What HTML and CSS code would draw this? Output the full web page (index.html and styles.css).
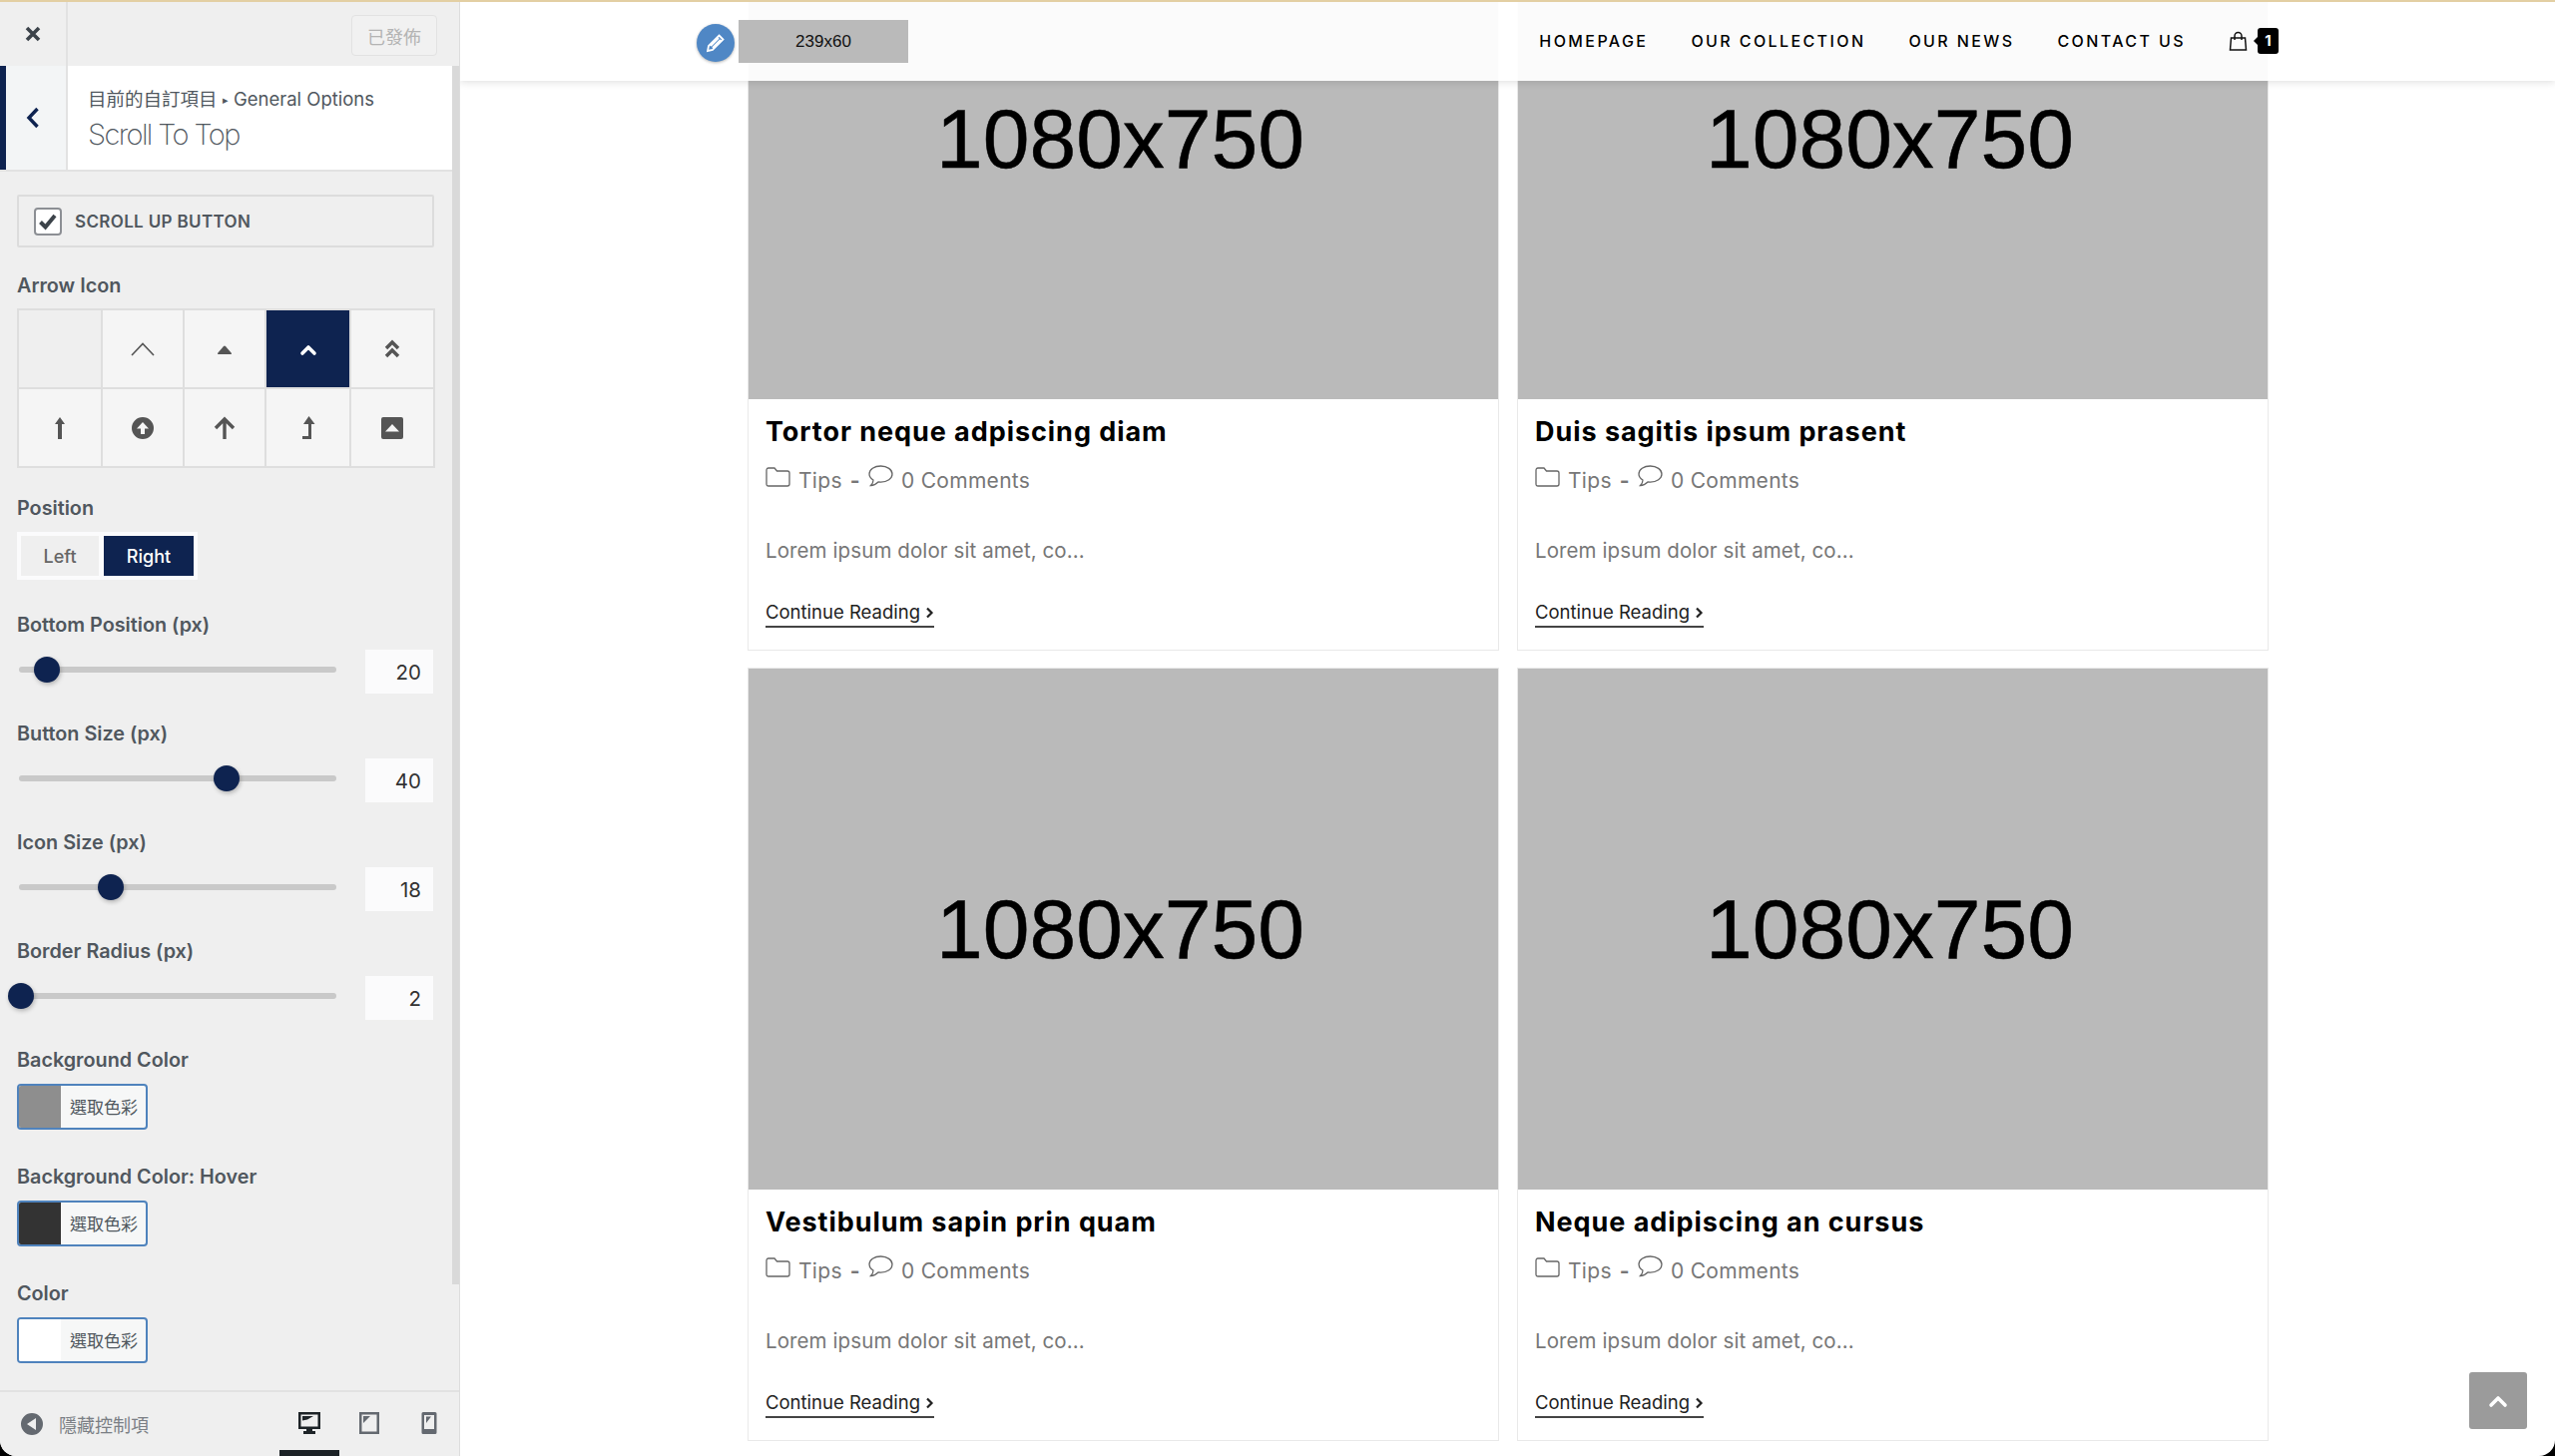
FILE: index.html
```html
<!DOCTYPE html>
<html lang="zh-Hant">
<head>
<meta charset="utf-8">
<title>Scroll To Top</title>
<link rel="stylesheet" href="styles.css">
</head>
<body>
<div class="window">
  <aside class="panel">
    <div class="panel-top">
      <button class="close-btn" aria-label="close"><svg width="16" height="16" viewBox="0 0 16 16"><path d="M2 2l12 12M14 2L2 14" class="close-path"/></svg></button>
      <button class="publish">已發佈</button>
    </div>
    <div class="section-head">
      <div class="back"><svg width="14" height="22" viewBox="0 0 14 22"><path d="M11.500 2L3 11l8.500 9" class="back-path"/></svg></div>
      <div class="section-title">
        <div class="crumb">目前的自訂項目 <span class="crumb-sep">▸</span> General Options</div>
        <div class="heading">Scroll To Top</div>
      </div>
    </div>
    <div class="panel-body">
      <label class="check-row">
        <span class="checkbox"><svg width="20" height="18" viewBox="0 0 20 18"><path d="M2.500 9.500l5 5L17 3" class="check-path"/></svg></span>
        <span class="check-label">SCROLL UP BUTTON</span>
      </label>

      <div class="label label-arrow">Arrow Icon</div>
      <div class="icon-grid">
        <div class="cell cell-empty"></div>
        <div class="cell"><svg width="24" height="24" viewBox="0 0 24 24"><path d="M1 18L12 6.500 23 18" class="line-thin"/></svg></div>
        <div class="cell"><svg width="24" height="24" viewBox="0 0 24 24"><path d="M5 16l6-7q1-1 2 0l6 7q.5 1-1 1H6q-1.500 0-1-1z" class="fill-icon"/></svg></div>
        <div class="cell cell-on"><svg width="24" height="24" viewBox="0 0 24 24"><path d="M6 16l6-6 6 6" class="line-white"/></svg></div>
        <div class="cell"><svg width="24" height="24" viewBox="0 0 24 24"><path d="M6 11l6-6 6 6M6 19l6-6 6 6" class="line-bold"/></svg></div>
        <div class="cell"><svg width="24" height="24" viewBox="0 0 24 24"><path d="M12 1l5 7h-3v15h-4V8H7z" class="fill-icon"/></svg></div>
        <div class="cell"><svg width="24" height="24" viewBox="0 0 24 24"><path d="M12 1a11 11 0 1 0 0 22 11 11 0 0 0 0-22zm0 5l6 6.500h-4V18h-4v-5.500H6z" class="fill-icon" fill-rule="evenodd"/></svg></div>
        <div class="cell"><svg width="24" height="24" viewBox="0 0 24 24"><path d="M12 23V4M3 12l9-9 9 9" class="line-arrow"/></svg></div>
        <div class="cell"><svg width="24" height="24" viewBox="0 0 24 24"><path d="M12.500 0l6 8H15v15H6v-3h6V8H7z" class="fill-icon"/></svg></div>
        <div class="cell"><svg width="24" height="24" viewBox="0 0 24 24"><path d="M3 1h18q2 0 2 2v18q0 2-2 2H3q-2 0-2-2V3q0-2 2-2zm9 7l-7 7.500h14z" class="fill-icon" fill-rule="evenodd"/></svg></div>
      </div>

      <div class="label label-position">Position</div>
      <div class="segmented">
        <span class="seg seg-left">Left</span>
        <span class="seg seg-right">Right</span>
      </div>

      <div class="range-group range-first">
        <div class="label">Bottom Position (px)</div>
        <div class="range-row">
          <div class="slider"><span class="knob" style="left:15px"></span></div>
          <div class="number">20</div>
        </div>
      </div>
      <div class="range-group">
        <div class="label">Button Size (px)</div>
        <div class="range-row">
          <div class="slider"><span class="knob" style="left:195px"></span></div>
          <div class="number">40</div>
        </div>
      </div>
      <div class="range-group">
        <div class="label">Icon Size (px)</div>
        <div class="range-row">
          <div class="slider"><span class="knob" style="left:79px"></span></div>
          <div class="number">18</div>
        </div>
      </div>
      <div class="range-group">
        <div class="label">Border Radius (px)</div>
        <div class="range-row">
          <div class="slider"><span class="knob" style="left:-11px"></span></div>
          <div class="number">2</div>
        </div>
      </div>

      <div class="color-group color-first">
        <div class="label">Background Color</div>
        <div class="color-btn"><span class="swatch swatch-gray"></span><span class="color-text">選取色彩</span></div>
      </div>
      <div class="color-group">
        <div class="label">Background Color: Hover</div>
        <div class="color-btn"><span class="swatch swatch-dark"></span><span class="color-text">選取色彩</span></div>
      </div>
      <div class="color-group">
        <div class="label">Color</div>
        <div class="color-btn"><span class="swatch swatch-white"></span><span class="color-text">選取色彩</span></div>
      </div>
    </div>
    <span class="scrollbar"></span>
    <div class="panel-foot">
      <svg class="hide-icon" width="24" height="24" viewBox="0 0 24 24"><path d="M12 1a11 11 0 1 0 0 22 11 11 0 0 0 0-22zm4 5v12L7 12z" class="foot-fill" fill-rule="evenodd"/></svg>
      <span class="hide-text">隱藏控制項</span>
      <div class="devices">
        <span class="device device-on"><svg width="24" height="24" viewBox="0 0 24 24"><path d="M1 1h22v17H15v2h3v3H6v-3h3v-2H1zm2.500 2.500v12h17v-12zM5 5h11l-6 3.500-5 1z" class="desk-fill" fill-rule="evenodd"/></svg></span>
        <span class="device"><svg width="22" height="24" viewBox="0 0 22 24"><path d="M1 1h20v22H1zm2.500 2.500v17h15v-17zM5 5h7l-7 7z" class="foot-fill" fill-rule="evenodd"/></svg></span>
        <span class="device"><svg width="16" height="24" viewBox="0 0 16 24"><path d="M2 1h12q1.500 0 1.500 1.500v19Q15.500 23 14 23H2Q.5 23 .5 21.500v-19Q.5 1 2 1zm1 3v14h10V4zm2 1.500h5L5 12z" class="foot-fill" fill-rule="evenodd"/></svg></span>
      </div>
    </div>
  </aside>

  <main class="preview">
    <header class="site-head">
      <div class="logo"><span class="edit-pin"><svg width="20" height="20" viewBox="0 0 20 20"><path d="M13.500 2.500l4 4L7 17l-5 1 1-5zM5 13l8-8M7 15l8-8" class="pencil"/></svg></span>239x60</div>
      <nav class="nav">
        <a class="nav-link">HOMEPAGE</a>
        <a class="nav-link">OUR COLLECTION</a>
        <a class="nav-link">OUR NEWS</a>
        <a class="nav-link">CONTACT US</a>
        <span class="cart">
          <svg width="19" height="20" viewBox="0 0 19 20"><path d="M2.500 7h14l1 12h-16zM6 9V5a3.500 3.500 0 0 1 7 0v4" class="bag"/></svg>
          <span class="cart-count">1</span>
        </span>
      </nav>
    </header>

    <div class="posts">
      <article class="card">
        <div class="post-img">1080x750</div>
        <div class="card-body">
          <h2 class="post-title">Tortor neque adpiscing diam</h2>
          <div class="meta">
            <svg class="folder" width="25" height="21" viewBox="0 0 25 21"><path d="M1 3.500Q1 1 3 1h6l2.500 3H22q2 0 2 2v11q0 2-2 2H3q-2 0-2-2z" class="thin"/></svg>
            <span class="meta-text">Tips</span><span class="dash">-</span>
            <svg class="bubble" width="25" height="22" viewBox="0 0 25 22"><path d="M12.500 1C6 1 1 4.500 1 9c0 2.500 1.500 4.500 4 6 0 2-1 4-2.500 5.500 3 0 5.500-1.500 7.500-3.500 1 .1 1.500.1 2.500.1 6.500 0 11.500-3.600 11.500-8S19 1 12.500 1z" class="thin"/></svg>
            <span class="meta-text">0 Comments</span>
          </div>
          <p class="excerpt">Lorem ipsum dolor sit amet, co...</p>
          <a class="more">Continue Reading <svg width="9" height="12" viewBox="0 0 9 12"><path d="M2 1.500L6.500 6 2 10.500" class="more-path"/></svg></a>
        </div>
      </article>
      <article class="card">
        <div class="post-img">1080x750</div>
        <div class="card-body">
          <h2 class="post-title">Duis sagitis ipsum prasent</h2>
          <div class="meta">
            <svg class="folder" width="25" height="21" viewBox="0 0 25 21"><path d="M1 3.500Q1 1 3 1h6l2.500 3H22q2 0 2 2v11q0 2-2 2H3q-2 0-2-2z" class="thin"/></svg>
            <span class="meta-text">Tips</span><span class="dash">-</span>
            <svg class="bubble" width="25" height="22" viewBox="0 0 25 22"><path d="M12.500 1C6 1 1 4.500 1 9c0 2.500 1.500 4.500 4 6 0 2-1 4-2.500 5.500 3 0 5.500-1.500 7.500-3.500 1 .1 1.500.1 2.500.1 6.500 0 11.500-3.600 11.500-8S19 1 12.500 1z" class="thin"/></svg>
            <span class="meta-text">0 Comments</span>
          </div>
          <p class="excerpt">Lorem ipsum dolor sit amet, co...</p>
          <a class="more">Continue Reading <svg width="9" height="12" viewBox="0 0 9 12"><path d="M2 1.500L6.500 6 2 10.500" class="more-path"/></svg></a>
        </div>
      </article>
      <article class="card">
        <div class="post-img">1080x750</div>
        <div class="card-body">
          <h2 class="post-title">Vestibulum sapin prin quam</h2>
          <div class="meta">
            <svg class="folder" width="25" height="21" viewBox="0 0 25 21"><path d="M1 3.500Q1 1 3 1h6l2.500 3H22q2 0 2 2v11q0 2-2 2H3q-2 0-2-2z" class="thin"/></svg>
            <span class="meta-text">Tips</span><span class="dash">-</span>
            <svg class="bubble" width="25" height="22" viewBox="0 0 25 22"><path d="M12.500 1C6 1 1 4.500 1 9c0 2.500 1.500 4.500 4 6 0 2-1 4-2.500 5.500 3 0 5.500-1.500 7.500-3.500 1 .1 1.500.1 2.500.1 6.500 0 11.500-3.600 11.500-8S19 1 12.500 1z" class="thin"/></svg>
            <span class="meta-text">0 Comments</span>
          </div>
          <p class="excerpt">Lorem ipsum dolor sit amet, co...</p>
          <a class="more">Continue Reading <svg width="9" height="12" viewBox="0 0 9 12"><path d="M2 1.500L6.500 6 2 10.500" class="more-path"/></svg></a>
        </div>
      </article>
      <article class="card">
        <div class="post-img">1080x750</div>
        <div class="card-body">
          <h2 class="post-title">Neque adipiscing an cursus</h2>
          <div class="meta">
            <svg class="folder" width="25" height="21" viewBox="0 0 25 21"><path d="M1 3.500Q1 1 3 1h6l2.500 3H22q2 0 2 2v11q0 2-2 2H3q-2 0-2-2z" class="thin"/></svg>
            <span class="meta-text">Tips</span><span class="dash">-</span>
            <svg class="bubble" width="25" height="22" viewBox="0 0 25 22"><path d="M12.500 1C6 1 1 4.500 1 9c0 2.500 1.500 4.500 4 6 0 2-1 4-2.500 5.500 3 0 5.500-1.500 7.500-3.500 1 .1 1.500.1 2.500.1 6.500 0 11.500-3.600 11.500-8S19 1 12.500 1z" class="thin"/></svg>
            <span class="meta-text">0 Comments</span>
          </div>
          <p class="excerpt">Lorem ipsum dolor sit amet, co...</p>
          <a class="more">Continue Reading <svg width="9" height="12" viewBox="0 0 9 12"><path d="M2 1.500L6.500 6 2 10.500" class="more-path"/></svg></a>
        </div>
      </article>
    </div>

    <a class="to-top"><svg width="20" height="14" viewBox="0 0 20 14"><path d="M3 11l7-7 7 7" class="line-white"/></svg></a>
  </main>
</div>
</body>
</html>
```
FILE: styles.css
```css
* { box-sizing: border-box; }
html, body { margin: 0; height: 100%; background: #000; }
body { overflow: hidden; font-family: "Inter", "Noto Sans CJK TC", sans-serif; }
.window {
  display: flex;
  height: 1459px;
  border-top: 2px solid #e3cfa3;
  border-radius: 0 0 16px 16px;
  overflow: hidden;
  background: #fff;
}

/* customizer panel */
.panel {
  position: relative;
  flex: 0 0 461px;
  min-width: 0;
  display: flex;
  flex-direction: column;
  background: #efefef;
  border-right: 1px solid #ddd;
}
.panel-top {
  flex: 0 0 64px;
  display: flex;
  align-items: flex-start;
  justify-content: space-between;
  padding-right: 22px;
}
.close-btn {
  width: 68px;
  height: 64px;
  padding: 0;
  border: 0;
  border-right: 2px solid #e2e2e2;
  background: none;
  display: flex;
  align-items: center;
  justify-content: center;
}
.close-path { fill: none; stroke: #3c434a; stroke-width: 3.600; }
.publish {
  width: 86px;
  height: 41px;
  margin-top: 13px;
  border: 1px solid #e2e2e2;
  border-radius: 4px;
  background: #f1f1f1;
  color: #b4b4b4;
  font: 400 18px "Noto Sans CJK TC", sans-serif;
  padding: 0;
}
.section-head {
  flex: 0 0 106px;
  display: flex;
  margin-right: 7px;
  background: #fff;
  border-bottom: 2px solid #e2e2e2;
}
.back {
  width: 68px;
  display: flex;
  align-items: center;
  justify-content: center;
  background: #f3f5f6;
  border-left: 6px solid #0e2350;
  border-right: 2px solid #e2e2e2;
  padding-right: 6px;
}
.back-path { fill: none; stroke: #0e2350; stroke-width: 3.400; }
.section-title { padding: 20px 0 0 20px; }
.crumb {
  font-size: 18.500px;
  line-height: 26px;
  color: #50575e;
  white-space: nowrap;
}
.crumb-sep { font-size: 11px; vertical-align: 2px; }
.heading {
  font-size: 29px;
  font-weight: 200;
  line-height: 44px;
  color: #50575e;
  letter-spacing: -1.600px;
}
.panel-body {
  flex: 1 1 auto;
  padding: 23px 24px 0 17px;
  overflow: hidden;
}
.scrollbar {
  position: absolute;
  right: 0;
  top: 64px;
  width: 7px;
  height: 1221px;
  background: #d9d9d9;
}
.check-row {
  display: flex;
  align-items: center;
  height: 53px;
  margin-right: 1px;
  padding-left: 15px;
  border: 2px solid #dcdcdc;
  border-radius: 2px;
}
.checkbox {
  width: 28px;
  height: 28px;
  display: flex;
  align-items: center;
  justify-content: center;
  background: #fff;
  border: 2px solid #8c8f94;
  border-radius: 4px;
}
.check-path { fill: none; stroke: #3c434a; stroke-width: 4; }
.check-label {
  margin-left: 13px;
  font-size: 17px;
  font-weight: 600;
  letter-spacing: .35px;
  color: #50575e;
}
.label {
  font-size: 19.800px;
  font-weight: 600;
  line-height: 24px;
  color: #50575e;
}
.label-arrow { margin-top: 26px; }
.icon-grid {
  display: grid;
  grid-template-columns: 82px 80px 80px 83px 82px;
  grid-auto-rows: 1fr;
  gap: 2px;
  height: 160px;
  margin: 11px 0 0;
  padding: 2px;
  background: #dedede;
}
.cell {
  display: flex;
  align-items: center;
  justify-content: center;
  background: #f5f5f5;
}
.cell-empty { background: #efefef; }
.cell-on { background: #0e2350; }
.fill-icon { fill: #555; }
.line-thin { fill: none; stroke: #555; stroke-width: 1.600; }
.line-bold { fill: none; stroke: #555; stroke-width: 3.500; }
.line-arrow { fill: none; stroke: #555; stroke-width: 3.400; }
.line-white { fill: none; stroke: #fff; stroke-width: 3.600; stroke-linecap: round; stroke-linejoin: round; }
.label-position { margin-top: 28px; }
.segmented {
  display: inline-flex;
  gap: 5px;
  height: 48px;
  margin: 12px 0 0;
  padding: 4px;
  background: #fbfbfc;
  vertical-align: top;
}
.seg {
  display: flex;
  align-items: center;
  justify-content: center;
  font-size: 18px;
  font-weight: 500;
}
.seg-left { width: 78px; background: #efefef; color: #666; }
.seg-right { width: 90px; background: #0e2350; color: #fff; }
.range-group { margin-top: 28px; }
.range-first { margin-top: 33px; }
.range-row {
  display: flex;
  align-items: flex-start;
  justify-content: space-between;
  margin-top: 13px;
}
.slider {
  position: relative;
  width: 318px;
  height: 6px;
  margin-top: 17px;
  margin-left: 2px;
  border-radius: 3px;
  background: #c9c9c9;
}
.knob {
  position: absolute;
  top: -10px;
  width: 26px;
  height: 26px;
  border-radius: 50%;
  background: #0e2350;
  box-shadow: 1px 2px 4px rgba(0,0,0,.25);
}
.number {
  width: 68px;
  height: 44px;
  margin-right: 2px;
  padding-right: 12px;
  background: #fbfbfc;
  color: #333;
  font-size: 20.500px;
  line-height: 46px;
  text-align: right;
}
.color-group { margin-top: 35px; }
.color-first { margin-top: 28px; }
.color-btn {
  display: flex;
  width: 131px;
  height: 46px;
  margin-top: 12px;
  overflow: hidden;
  border: 2px solid #4f83bd;
  border-radius: 4px;
  background: #f6f7f7;
}
.swatch { flex: 0 0 42px; }
.swatch-gray { background: #8e8e8e; }
.swatch-dark { background: #333; }
.swatch-white { background: #fff; }
.color-text {
  margin-left: 9px;
  font: 400 17px/41px "Noto Sans CJK TC", sans-serif;
  color: #50575e;
  white-space: nowrap;
}
.panel-foot {
  position: relative;
  flex: 0 0 66px;
  display: flex;
  align-items: center;
  padding: 0 0 0 20px;
  border-top: 2px solid #e2e2e2;
}
.foot-fill { fill: #646970; }
.desk-fill { fill: #1d2327; }
.hide-text {
  margin-left: 15px;
  font: 400 18px "Noto Sans CJK TC", sans-serif;
  color: #7b7f85;
}
.devices {
  display: flex;
  margin-left: auto;
  align-self: stretch;
}
.device {
  width: 60px;
  display: flex;
  align-items: center;
  justify-content: center;
  margin-top: -2px;
}
.device-on::after {
  content: "";
  position: absolute;
  bottom: 0;
  width: 60px;
  height: 6px;
  background: #1d2327;
}

/* site preview */
.preview {
  position: relative;
  flex: 1 1 auto;
  min-width: 0;
  overflow: hidden;
}
.site-head {
  position: absolute;
  z-index: 2;
  top: 0;
  left: 0;
  right: 0;
  height: 79px;
  display: flex;
  align-items: center;
  padding: 0 277px 0 279px;
  background: rgba(255,255,255,.94);
  box-shadow: 0 1px 8px rgba(0,0,0,.14);
}
.logo {
  position: relative;
  width: 170px;
  height: 43px;
  background: #bababa;
  color: #111;
  font: 400 17px/43px "Liberation Sans", sans-serif;
  text-align: center;
}
.edit-pin {
  position: absolute;
  left: -42px;
  top: 4px;
  width: 38px;
  height: 38px;
  display: flex;
  align-items: center;
  justify-content: center;
  border-radius: 50%;
  background: #4f87c5;
  box-shadow: 0 1px 3px rgba(0,0,0,.3), 0 0 0 1px #fff;
}
.pencil { fill: none; stroke: #fff; stroke-width: 1.800; }
.nav {
  display: flex;
  align-items: center;
  gap: 43px;
  margin-left: auto;
  margin-top: -2px;
}
.nav-link {
  font-size: 16px;
  font-weight: 500;
  letter-spacing: 2.400px;
  color: #000;
  white-space: nowrap;
}
.cart {
  display: flex;
  align-items: center;
  gap: 10px;
}
.bag { fill: none; stroke: #111; stroke-width: 1.500; }
.cart-count {
  position: relative;
  width: 21px;
  height: 26px;
  border-radius: 3px;
  background: #000;
  color: #fff;
  font-size: 15px;
  font-weight: 700;
  line-height: 26px;
  text-align: center;
}
.cart-count::before {
  content: "";
  position: absolute;
  left: -4px;
  top: 9px;
  border: 4px solid transparent;
  border-left: 0;
  border-right-color: #000;
}
.posts {
  display: grid;
  grid-template-columns: 753px 753px;
  gap: 17px 18px;
  margin: -125px 0 0 288px;
}
.card { border: 1px solid #e9e9e9; background: #fff; }
.post-img {
  height: 522px;
  padding-right: 6px;
  background: #bababa;
  color: #000;
  font: 400 84px/522px "Liberation Sans", sans-serif;
  text-align: center;
  -webkit-text-stroke: .5px #000;
}
.card-body { padding: 15px 17px 22px; }
.post-title {
  margin: 0;
  font-size: 27px;
  font-weight: 700;
  line-height: 36px;
  letter-spacing: .95px;
  color: #000;
}
.meta {
  display: flex;
  align-items: center;
  height: 30px;
  margin-top: 15px;
  color: #777;
  font-size: 21px;
  letter-spacing: .3px;
}
.meta-text { white-space: nowrap; }
.folder { margin: -6px 8px 0 0; }
.bubble { margin: -8px 8px 0 0; }
.thin { fill: none; stroke: #666; stroke-width: 1.300; }
.dash { margin: 0 8px; font-weight: 700; }
.excerpt {
  margin: 41px 0 0;
  font-size: 20.500px;
  letter-spacing: .1px;
  line-height: 30px;
  color: #777;
}
.more {
  display: inline-block;
  margin-top: 34px;
  padding-bottom: 2px;
  border-bottom: 2px solid #444;
  font-size: 18.500px;
  line-height: 24px;
  color: #222;
}
.more-path { fill: none; stroke: #222; stroke-width: 2.200; }
.to-top {
  position: absolute;
  right: 28px;
  bottom: 27px;
  width: 58px;
  height: 57px;
  display: flex;
  align-items: center;
  justify-content: center;
  border-radius: 3px;
  background: #9b9b9b;
}
```
